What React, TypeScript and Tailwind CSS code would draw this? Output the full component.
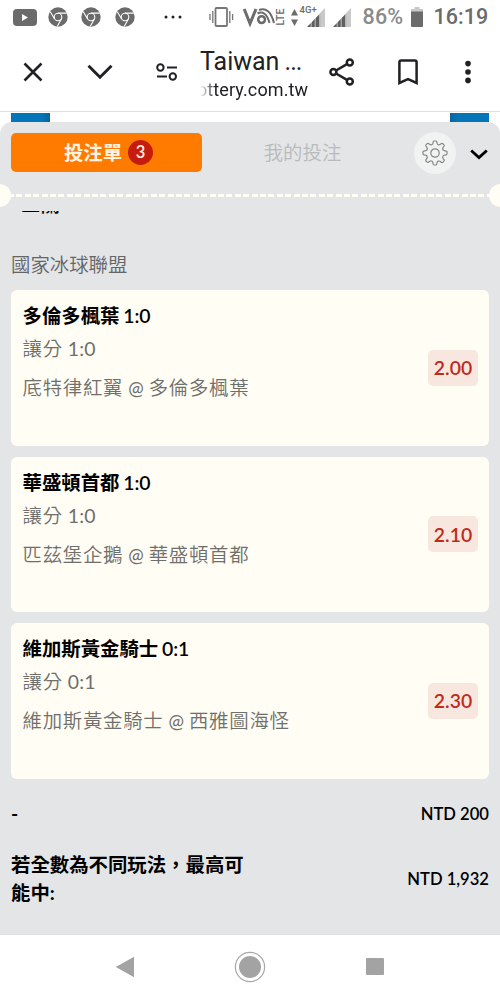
import React from 'react';

interface Bet {
  id: number;
  pick: string;
  score: string;
  match: string[];
  odds: string;
}

const bets: Bet[] = [
  { id: 1, pick: '多倫多楓葉', score: '1:0', match: ['底特律紅翼', '多倫多楓葉'], odds: '2.00' },
  { id: 2, pick: '華盛頓首都', score: '1:0', match: ['匹茲堡企鵝', '華盛頓首都'], odds: '2.10' },
  { id: 3, pick: '維加斯黃金騎士', score: '0:1', match: ['維加斯黃金騎士', '西雅圖海怪'], odds: '2.30' },
];

function ChromeIcon() {
  return (
    <svg width="20" height="20" viewBox="0 0 20 20" fill="none">
      <circle cx="10" cy="10" r="9.7" fill="#6b6b6b" />
      <circle cx="10" cy="10" r="3.8" stroke="#fff" strokeWidth="1.1" />
      <path d="M10 6.1h8.8M6.6 12 2.3 4.7M13.4 12 9.2 19.5" stroke="#fff" strokeWidth="1.1" />
    </svg>
  );
}

function Signal() {
  return (
    <svg width="18" height="19" viewBox="0 0 18 19">
      <path d="M0 19 13.5 5V19z" fill="#5f5f5f" />
      <path d="M13.5 4.500 18 0V19h-4.500z" fill="#c9c9c9" />
      <path d="M4.2 12v7M8.2 8v11M12.6 4v15" stroke="#fff" strokeWidth="0.6" />
    </svg>
  );
}

function StatusBar() {
  return (
    <div className="flex h-[35px] items-center bg-white font-[Roboto,sans-serif] text-[#6b6b6b]">
      <svg className="ml-[13px] -mt-px" width="24" height="17" viewBox="0 0 24 17">
        <rect width="24" height="17" rx="4" fill="#6b6b6b" />
        <path d="M9 5v7l6-3.5z" fill="#fff" />
      </svg>
      <div className="ml-[11px] -mt-[2px] flex gap-[13.3px]">
        <ChromeIcon />
        <ChromeIcon />
        <ChromeIcon />
      </div>
      <svg className="ml-[29px] -mt-[2px]" width="18" height="4" viewBox="0 0 18 4" fill="#222">
        <circle cx="2" cy="2" r="1.5" />
        <circle cx="9" cy="2" r="1.5" />
        <circle cx="16" cy="2" r="1.5" />
      </svg>
      {/* vibrate */}
      <svg className="ml-[27px] -mt-[2px]" width="25" height="20" viewBox="0 0 25 20" fill="none" stroke="#777">
        <rect x="6.5" y="1" width="11.5" height="18" rx="1" strokeWidth="1.8" />
        <path d="M3.8 4v12M20.8 4v12" strokeWidth="1.3" />
        <path d="M1 7v6M23.6 7v6" strokeWidth="1.3" />
      </svg>
      {/* VoLTE */}
      <svg className="ml-[9px] -mt-[2px] overflow-visible" width="42" height="20" viewBox="0 0 42 20" fill="none" stroke="#6b6b6b">
        <path d="M1.2 2 7 16.5 13 2" strokeWidth="3" />
        <circle cx="18.6" cy="12.6" r="3.4" strokeWidth="2.5" />
        <path d="M14.5 6.5c5-2.6 9.5 0 12 9.5M16 3c7-2.4 12 1.5 15 13" strokeWidth="2" />
        <text
          transform="translate(41 18.5) rotate(-90)"
          className="font-[Roboto] text-[10.5px]"
          fontWeight="500"
          fill="#6b6b6b"
          stroke="none"
          textLength="17"
        >
          LTE
        </text>
      </svg>
      <svg className="ml-[6px] -mt-[1px]" width="7" height="17" viewBox="0 0 7 17" fill="#6b6b6b">
        <path d="M3.5 0 7 6.5H0zM3.5 17 7 10.5H0z" />
      </svg>
      <div className="relative ml-[9px]">
        <Signal />
        <span className="absolute -left-[7px] -top-[3px] text-[9.5px] leading-[10px] font-medium">4G+</span>
      </div>
      <div className="ml-2">
        <Signal />
      </div>
      <span className="ml-3 w-10 text-[21.5px] font-medium text-[#8a8a8a] tracking-[0.1px]">86%</span>
      <svg className="ml-[8px] -mt-[2px]" width="12" height="20" viewBox="0 0 12 20">
        <path d="M3.5 0h5v2H12v4H0V2h3.5z" fill="#c9c9c9" />
        <path d="M0 4.5h12V19q0 1-1 1H1q-1 0-1-1z" fill="#6b6b6b" />
      </svg>
      <span className="ml-[11px] text-[21.5px] font-medium">16:19</span>
    </div>
  );
}

function BrowserBar() {
  return (
    <div className="flex h-[77px] items-center border-b border-[#dedede] bg-white pb-[3px] font-[Roboto,sans-serif] text-[#202124]">
      <svg className="ml-[23px]" width="20" height="20" viewBox="0 0 20 20" stroke="#202124" strokeWidth="2.5">
        <path d="m1.5 1.5 17 17M18.5 1.5l-17 17" />
      </svg>
      <svg className="ml-[44px]" width="26" height="16" viewBox="0 0 26 16" fill="none" stroke="#202124" strokeWidth="2.9">
        <path d="M1.5 1.8 13 13.2 24.5 1.8" />
      </svg>
      {/* site settings */}
      <svg className="ml-[43px]" width="22" height="18" viewBox="0 0 22 18" fill="none" stroke="#202124" strokeWidth="2">
        <circle cx="4.4" cy="4.5" r="3.2" />
        <circle cx="16.8" cy="13.5" r="3.2" />
        <path d="M11 4.5h10M1 13.5h10" />
      </svg>
      <div className="ml-[22px] w-[110px] pt-[8px]">
        <p className="h-[29px] whitespace-nowrap text-[25px] leading-[28px]">
          Taiwan <span className="-ml-[1px] tracking-[-1px]">...</span>
        </p>
        <p className="h-[26px] whitespace-nowrap text-[18px] leading-[26px] tracking-[0.1px] [mask-image:linear-gradient(to_right,transparent,black_16px)]">
          <span className="-ml-[3px]">ottery.com.tw</span>
        </p>
      </div>
      <svg className="ml-[19px]" width="26" height="28" viewBox="0 0 26 28" fill="none" stroke="#202124" strokeWidth="2.5">
        <path d="M7 12.5 18 6.2M7 15.5l11 6.3" />
        <circle cx="4.4" cy="14" r="3" />
        <circle cx="20.8" cy="4.6" r="3" />
        <circle cx="20.8" cy="23.4" r="3" />
      </svg>
      <svg className="ml-[43px]" width="20" height="26" viewBox="0 0 20 26" fill="none" stroke="#202124" strokeWidth="2.5">
        <path d="M1.4 24V3.2Q1.4 1.4 3.2 1.4h13.6q1.8 0 1.8 1.8V24L10 20.2z" />
      </svg>
      <svg className="ml-[47px]" width="6" height="24" viewBox="0 0 6 24" fill="#202124">
        <circle cx="3" cy="3.6" r="2.8" />
        <circle cx="3" cy="12" r="2.8" />
        <circle cx="3" cy="20.4" r="2.8" />
      </svg>
    </div>
  );
}

function GearIcon() {
  return (
    <svg width="26" height="26" viewBox="0 0 26 26" fill="none" stroke="#858585" strokeWidth="1.2" strokeLinejoin="round">
      <circle cx="13" cy="13" r="4.2" />
      <path d="M10.8 3.7 11.2 1.8Q11.4 1 12.2 1h1.6q.8 0 1 .8l.4 1.9q.3 1 1.3 1.2.8.2 1.5-.3l1.6-1.1q.7-.4 1.2.1l1.2 1.2q.5.5.1 1.2L21 7.6q-.5.8-.2 1.6.4 1.2 1.5 1.5l1.9.4q.8.2.8 1v1.7q0 .8-.8 1l-1.9.4q-1.1.3-1.5 1.4-.3.9.2 1.7l1.1 1.6q.4.7-.1 1.2l-1.2 1.2q-.5.5-1.2.1L18 21.3q-.7-.5-1.6-.2-1 .3-1.3 1.3l-.4 1.9q-.2.7-1 .7h-1.5q-.8 0-1-.8l-.4-1.9q-.3-1-1.3-1.3-.9-.2-1.6.3l-1.5 1q-.7.4-1.2-.1L4 21q-.5-.5-.1-1.2L5 18.2q.5-.8.1-1.7-.4-1.1-1.4-1.3l-1.9-.4q-.8-.2-.8-1v-1.7q0-.8.8-1l1.9-.4q1.1-.3 1.5-1.5.3-.9-.2-1.6L3.900 6q-.4-.7.1-1.2l1.2-1.2q.5-.5 1.2-.1L8 4.6q.7.5 1.5.3 1-.2 1.3-1.2z" />
    </svg>
  );
}

function SlipTabs() {
  return (
    <div className="flex h-[61px] items-center pl-[11px] text-[19.4px]">
      <div className="flex h-[39.5px] w-[191px] items-center justify-center gap-[6px] rounded-[5px] bg-[#ff7b00] pl-[4px]">
        <span className="font-bold leading-10 text-[#fff3e4]">投注單</span>
        <span className="flex h-[25px] w-[25px] items-center justify-center rounded-full bg-[#c41c0e] text-[16.5px] font-semibold text-[#fff3e4]">3</span>
      </div>
      <span className="w-[201px] text-center font-[350] text-[#b8babb]">我的投注</span>
      <div className="ml-[11px] flex h-[42px] w-[42px] items-center justify-center rounded-full bg-[#f1f3f3]">
        <GearIcon />
      </div>
      <svg className="ml-[14px] mt-[3px]" width="18" height="11" viewBox="0 0 18 11" fill="none" stroke="#000" strokeWidth="2.8">
        <path d="m1.2 1.5 7.8 7 7.8-7" />
      </svg>
    </div>
  );
}

// ticket perforation with a notch on both sides
function Perforation() {
  return (
    <div className="flex h-6 items-center justify-between overflow-hidden">
      <div className="-ml-3 h-[23px] w-[23px] shrink-0 rounded-full bg-[#fffdf4]" />
      <div className="mt-px h-[3px] flex-1 bg-[repeating-linear-gradient(to_right,#fffdf4_0px,#fffdf4_3px,transparent_3px,transparent_5.4px,#fffdf4_5.4px,#fffdf4_8.4px)]" />
      <div className="-mr-3 h-[23px] w-[23px] shrink-0 rounded-full bg-[#fffdf4]" />
    </div>
  );
}

function BetCard({ bet }: { bet: Bet }) {
  return (
    <div className="flex h-[155.5px] items-center justify-between rounded-[6px] bg-[#fffdf4] pl-[11.5px] pr-[11px]">
      <div className="h-full pt-[11px] text-[19.4px]">
        <p className="h-[32px] leading-[30px] font-bold text-black">
          {bet.pick} <span className="-ml-[1px] font-semibold">{bet.score}</span>
        </p>
        <p className="h-[39px] leading-[32px] font-[350] tracking-[0.75px] text-[#6f6f6c]">
          讓分 <span className="-ml-[1px] font-normal tracking-[0.2px]">{bet.score}</span>
        </p>
        <p className="leading-[32px] font-[350] tracking-[0.75px] text-[#6f6f6c]">
          {bet.match[0]}
          <span className="mx-[5px] text-[18.5px] font-normal tracking-normal">@</span>
          {bet.match[1]}
        </p>
      </div>
      <span className="flex h-9 w-[50px] items-center justify-center rounded-[5px] bg-[#f8e7df] text-[19.4px] font-semibold text-[#bf2a20]">
        {bet.odds}
      </span>
    </div>
  );
}

function NavBar() {
  return (
    <div className="flex h-[66px] items-center border-t border-[#dfe0e1] bg-white pb-[2px]">
      <svg className="ml-[115px]" width="20" height="22" viewBox="0 0 20 22" fill="#a3a3a3">
        <path d="M.8 11 19 .8v20.4z" />
      </svg>
      <svg className="ml-[99px]" width="32" height="32" viewBox="0 0 32 32" fill="none">
        <circle cx="16" cy="16" r="14.6" stroke="#a8a8a8" strokeWidth="1.2" />
        <circle cx="16" cy="16" r="11" fill="#a3a3a3" />
      </svg>
      <div className="ml-[100px] h-[17px] w-[18px] rounded-[1px] bg-[#a3a3a3]" />
    </div>
  );
}

export default function App() {
  return (
    <div className="flex h-[1000px] w-[500px] flex-col overflow-hidden bg-white font-['Lato','Noto_Sans_CJK_TC',sans-serif]">
      <StatusBar />
      <BrowserBar />
      <div className="flex h-[10px] shrink-0 justify-between px-[11px] pt-[1px]">
        <div className="w-[39px] bg-linear-to-r from-[#0375b8] from-80% to-[#08649a]" />
        <div className="w-[39px] bg-linear-to-l from-[#0375b8] from-80% to-[#08649a]" />
      </div>
      <div className="flex flex-1 flex-col rounded-t-[12px] bg-[#e4e5e7]">
        <SlipTabs />
        <Perforation />
        {/* scrolled list, first heading is cut off */}
        <div className="mt-[4px] h-[40px] overflow-hidden pl-[21px]">
          <p className="-mt-[18px] text-[19.4px] leading-[23px] font-medium">三關</p>
        </div>
        <div className="px-[11px]">
          <p className="h-[39px] text-[19.4px] leading-[28px] font-[350] text-[#646567]">國家冰球聯盟</p>
          <div className="flex flex-col gap-[11px]">
            {bets.map(bet => (
              <BetCard key={bet.id} bet={bet} />
            ))}
          </div>
          <div className="mt-[21.5px] flex items-center justify-between leading-[28px] font-semibold">
            <span className="text-[19.4px] font-bold">-</span>
            <span className="text-[16.6px]">NTD 200</span>
          </div>
          <div className="mt-[22.5px] flex items-center justify-between leading-[28px] font-semibold">
            <span className="w-[240px] text-[19.4px] font-bold">若全數為不同玩法，最高可能中:</span>
            <span className="text-[16.6px]">NTD 1,932</span>
          </div>
        </div>
      </div>
      <NavBar />
    </div>
  );
}
